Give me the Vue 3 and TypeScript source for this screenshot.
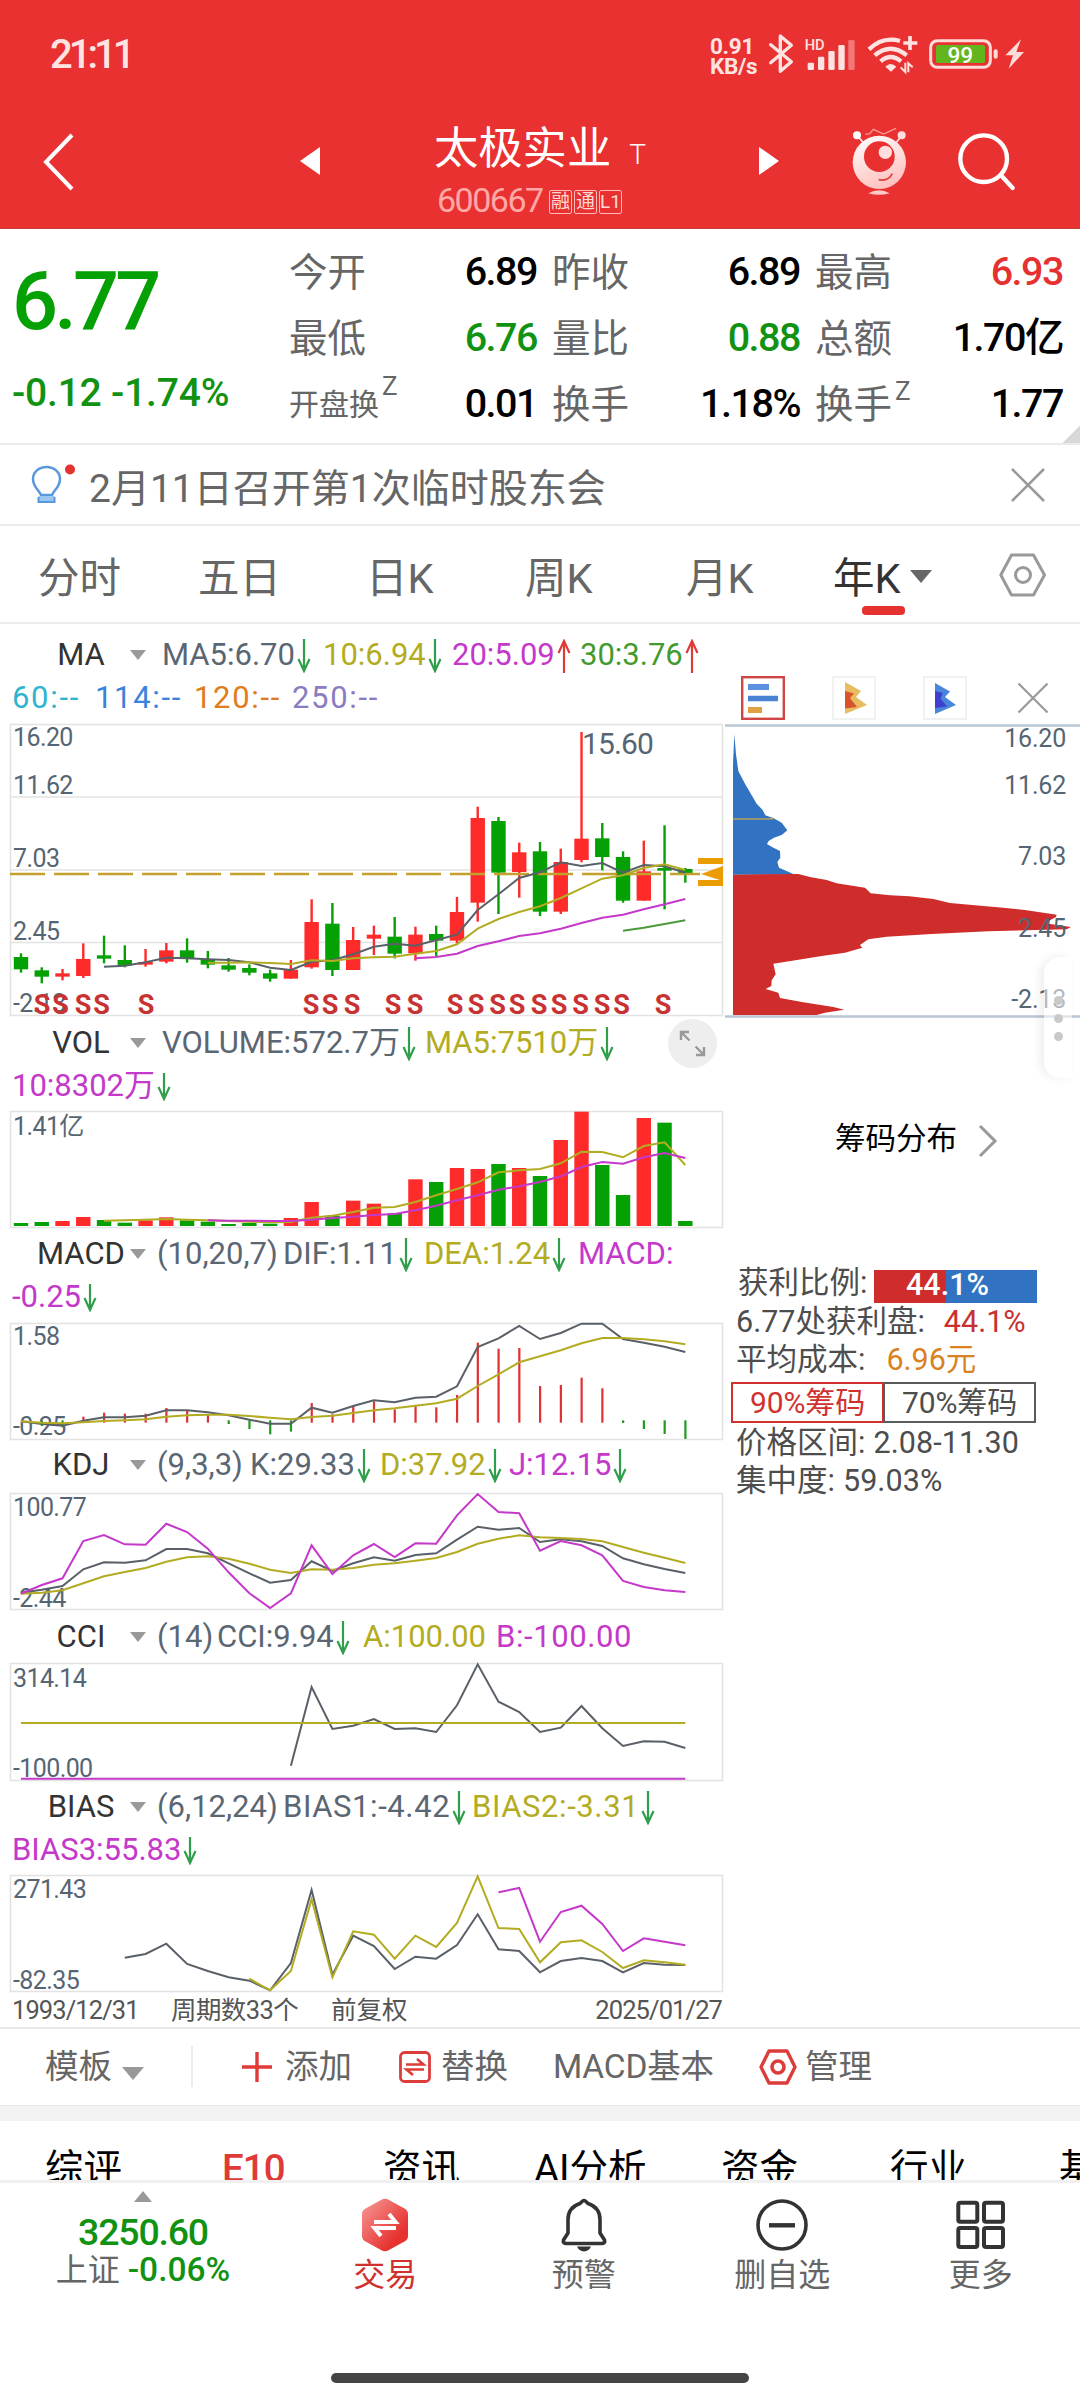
<script setup lang="ts">
type Arrow = 'up' | 'down' | ''
interface Reading { text: string; width: number; color: string; arrow?: Arrow }
interface Line { color: string; start: number; ys: number[] }
interface Label { text: string; y: number }
interface Bar { x: number; y: number; w: number; h: number; color: string }
interface Pane {
  name: string
  first: Reading[]
  second?: Reading[]
  top: number
  height: number
  frame: [number, number]
  labels: Label[]
  lines: Line[]
  bars: Bar[]
}

const GRAY = '#5b6673'
const OLIVE = '#b3ac22'
const MAGENTA = '#c438ca'
const RED = '#ff2a2a'
const GREEN = '#04a004'

const cx = (i: number): number => 21 + 20.76 * i
const points = (l: Line, base: number): string =>
  l.ys.map((v, k) => `${cx(l.start + k).toFixed(1)},${(base + v / 3).toFixed(1)}`).join(' ')

const line = (color: string, start: number, ys: number[]): Line => ({ color, start, ys })

const candles: [number, number, number, number, 0 | 1][] = [
  [970, 981, 1018, 1028, 0], [1012, 1021, 1040, 1060, 0], [1017, 1030, 1040, 1051, 1],
  [940, 987, 1038, 1044, 1], [917, 976, 986, 1000, 0], [946, 990, 1006, 1012, 0],
  [957, 996, 1004, 1010, 1], [939, 961, 995, 1000, 1], [925, 961, 986, 998, 0],
  [963, 988, 1004, 1015, 0], [984, 1006, 1019, 1025, 0], [1003, 1014, 1028, 1036, 0],
  [1019, 1030, 1046, 1055, 0], [990, 1019, 1046, 1046, 1], [808, 876, 1012, 1016, 1],
  [819, 881, 1020, 1038, 0], [891, 930, 1020, 1020, 1], [887, 914, 926, 975, 1],
  [861, 920, 971, 985, 0], [890, 914, 970, 992, 1], [887, 912, 932, 978, 0],
  [801, 846, 932, 940, 1], [530, 564, 818, 875, 1], [561, 573, 728, 852, 0],
  [638, 667, 726, 803, 1], [636, 664, 845, 858, 0], [656, 696, 845, 852, 1],
  [306, 626, 690, 697, 1], [579, 625, 681, 721, 0], [664, 681, 812, 818, 0],
  [632, 724, 812, 812, 1], [586, 714, 722, 838, 0], [714, 717, 729, 758, 0],
]

const signals = [42, 60.5, 83, 101.5, 146, 311, 330, 352, 393, 415, 455, 476, 497.5, 517, 539, 559, 580.5, 602, 621.5, 663]

const vol: [number, 0 | 1][] = [
  [609, 0], [606, 0], [603, 1], [591, 1], [600, 0], [608, 0], [601, 1], [592, 1], [601, 0], [605, 0], [612, 0],
  [609, 0], [611, 0], [594, 1], [546, 1], [587, 0], [542, 1], [551, 1], [580, 0], [478, 1], [486, 0], [444, 1],
  [447, 1], [432, 0], [444, 1], [468, 0], [360, 1], [275, 1], [435, 0], [525, 0], [294, 1], [308, 0], [603, 0],
]
const volBars: Bar[] = vol.map(([t, up], i) => ({
  x: cx(i) - 7.2, y: 1020 + t / 3, w: 14.4, h: (618 - t) / 3, color: up ? RED : GREEN,
}))

const hist = [0, 588, 592, 560, 548, 551, 551, 534, 543, 555, 582, 597, 613, 605, 519, 553, 528, 514, 538, 525, 532,
  495, 338, 356, 354, 468, 465, 443, 475, 579, 597, 612, 627]
const histBars: Bar[] = hist.map((v, i) => {
  const down = v > 577 || i === 1 || i === 2
  const a = down ? 571 : v
  const b = down ? v : 578
  return { x: cx(i) - 1, y: 1230 + a / 3, w: 2.2, h: v ? (b - a) / 3 : 0, color: down ? '#1f9a1f' : '#e03030' }
})

const base: Record<string, number> = { VOL: 1020, MACD: 1230, KDJ: 1440, CCI: 1610, BIAS: 1780 }

const maRows: Reading[][] = [
  [
    { text: 'MA5:6.70', width: 161, color: GRAY, arrow: 'down' },
    { text: '10:6.94', width: 129, color: OLIVE, arrow: 'down' },
    { text: '20:5.09', width: 128, color: MAGENTA, arrow: 'up' },
    { text: '30:3.76', width: 120, color: '#439a2c', arrow: 'up' },
  ],
  [
    { text: '60:--', width: 83, color: '#2fb4cf' },
    { text: '114:--', width: 99, color: '#3a83dd' },
    { text: '120:--', width: 98, color: '#e07c1e' },
    { text: '250:--', width: 100, color: '#8a7cc0' },
  ],
]

const maLines: Line[] = [
  line('#5a6068', 4, [1010, 1007, 997, 983, 985, 988, 990, 997, 1013, 1020, 995, 991, 973, 950, 941, 947, 930, 914, 840, 793, 744, 727, 697, 708, 699, 728, 705, 709, 728]),
  line(OLIVE, 9, [998, 998, 997, 999, 1002, 991, 993, 985, 982, 980, 971, 963, 943, 896, 867, 846, 829, 804, 775, 746, 736, 714, 703, 720]),
  line(MAGENTA, 19, [985, 981, 971, 948, 934, 918, 910, 896, 879, 863, 854, 838, 823, 807]),
  line('#4a9a3a', 29, [902, 893, 882, 871]),
]

const panes: Pane[] = [
  {
    name: 'VOL',
    first: [
      { text: 'VOLUME:572.7万', width: 263, color: GRAY, arrow: 'down' },
      { text: 'MA5:7510万', width: 200, color: OLIVE, arrow: 'down' },
    ],
    second: [{ text: '10:8302万', width: 180, color: MAGENTA, arrow: 'down' }],
    top: 1107, height: 125, frame: [1112, 1227],
    labels: [{ text: '1.41亿', y: 1134.5 }],
    bars: volBars,
    lines: [
      line(OLIVE, 4, [602, 601, 599, 597, 599, 601, 603, 605, 607, 606, 593, 587, 576, 563, 561, 546, 526, 507, 487, 457, 451, 447, 430, 395, 396, 412, 378, 367, 435]),
      line(MAGENTA, 9, [601, 602, 602, 603, 603, 599, 594, 590, 585, 582, 571, 557, 541, 526, 509, 499, 486, 469, 441, 426, 431, 412, 399, 414]),
    ],
  },
  {
    name: 'MACD',
    first: [
      { text: '(10,20,7)', width: 126, color: GRAY },
      { text: 'DIF:1.11', width: 141, color: GRAY, arrow: 'down' },
      { text: 'DEA:1.24', width: 154, color: OLIVE, arrow: 'down' },
      { text: 'MACD:', width: 100, color: MAGENTA },
    ],
    second: [{ text: '-0.25', width: 100, color: MAGENTA, arrow: 'down' }],
    top: 1318, height: 125, frame: [1324, 1439],
    labels: [{ text: '1.58', y: 1345 }, { text: '-0.25', y: 1434.5 }],
    bars: histBars,
    lines: [
      line('#5a6068', 0, [574, 582, 587, 572, 562, 562, 557, 541, 541, 547, 556, 569, 581, 581, 533, 548, 528, 511, 517, 503, 500, 469, 351, 325, 288, 327, 309, 281, 281, 327, 338, 350, 366]),
      line(OLIVE, 0, [574, 578, 580, 577, 573, 571, 568, 560, 556, 554, 554, 558, 563, 568, 561, 557, 549, 541, 535, 527, 520, 506, 468, 433, 397, 379, 361, 340, 324, 324, 328, 334, 343]),
    ],
  },
  {
    name: 'KDJ',
    first: [
      { text: '(9,3,3)', width: 93, color: GRAY },
      { text: 'K:29.33', width: 130, color: GRAY, arrow: 'down' },
      { text: 'D:37.92', width: 129, color: OLIVE, arrow: 'down' },
      { text: 'J:12.15', width: 130, color: MAGENTA, arrow: 'down' },
    ],
    top: 1486, height: 129, frame: [1494, 1609],
    labels: [{ text: '100.77', y: 1516 }, { text: '-2.44', y: 1606.5 }],
    bars: [],
    lines: [
      line('#5a6068', 0, [458, 449, 438, 388, 367, 368, 361, 327, 327, 340, 370, 400, 428, 420, 364, 393, 370, 352, 362, 345, 340, 299, 260, 269, 264, 306, 298, 304, 318, 355, 373, 387, 399]),
      line(OLIVE, 0, [461, 458, 451, 430, 409, 396, 384, 365, 352, 349, 356, 371, 389, 399, 388, 389, 384, 374, 370, 362, 354, 336, 311, 296, 286, 292, 294, 297, 304, 321, 338, 353, 369]),
      line(MAGENTA, 0, [461, 435, 415, 303, 285, 313, 314, 251, 276, 326, 397, 460, 504, 460, 316, 402, 346, 312, 351, 310, 311, 226, 162, 216, 220, 332, 303, 316, 346, 423, 441, 451, 456]),
    ],
  },
  {
    name: 'CCI',
    first: [
      { text: '(14)', width: 60, color: GRAY },
      { text: 'CCI:9.94', width: 146, color: GRAY, arrow: 'down' },
      { text: 'A:100.00', width: 133, color: OLIVE },
      { text: 'B:-100.00', width: 140, color: MAGENTA },
    ],
    top: 1658, height: 127, frame: [1664, 1780],
    labels: [{ text: '314.14', y: 1687 }, { text: '-100.00', y: 1777 }],
    bars: [],
    lines: [
      line('#5a6068', 13, [467, 231, 357, 347, 327, 357, 355, 366, 286, 163, 275, 306, 366, 353, 288, 355, 408, 394, 395, 414]),
      line(OLIVE, 0, new Array(33).fill(339)),
      line(MAGENTA, 0, new Array(33).fill(506)),
    ],
  },
  {
    name: 'BIAS',
    first: [
      { text: '(6,12,24)', width: 126, color: GRAY },
      { text: 'BIAS1:-4.42', width: 189, color: GRAY, arrow: 'down' },
      { text: 'BIAS2:-3.31', width: 189, color: OLIVE, arrow: 'down' },
    ],
    second: [{ text: 'BIAS3:55.83', width: 200, color: MAGENTA, arrow: 'down' }],
    top: 1871, height: 125, frame: [1876, 1991],
    labels: [{ text: '271.43', y: 1898 }, { text: '-82.35', y: 1988.5 }],
    bars: [],
    lines: [
      line('#5a6068', 5, [533, 522, 491, 552, 573, 592, 602, 631, 549, 330, 584, 467, 498, 567, 530, 536, 495, 403, 508, 513, 577, 543, 534, 543, 577, 549, 554, 555]),
      line(OLIVE, 11, [596, 631, 573, 358, 592, 454, 464, 536, 467, 501, 429, 289, 444, 447, 547, 487, 481, 516, 564, 541, 547, 554]),
      line(MAGENTA, 23, [337, 324, 485, 396, 377, 432, 513, 475, 485, 496]),
    ],
  },
]

const quotes = [
  { label: '今开', value: '6.89', tone: '' }, { label: '昨收', value: '6.89', tone: '' }, { label: '最高', value: '6.93', tone: 'up' },
  { label: '最低', value: '6.76', tone: 'down' }, { label: '量比', value: '0.88', tone: 'down' }, { label: '总额', value: '1.70亿', tone: '' },
  { label: '开盘换', value: '0.01', tone: '', z: true, small: true }, { label: '换手', value: '1.18%', tone: '' }, { label: '换手', value: '1.77', tone: '', z: true },
]

const tabs = [
  { text: '分时', width: 160 }, { text: '五日', width: 168 }, { text: '日K', width: 159 },
  { text: '周K', width: 161 }, { text: '月K', width: 147 }, { text: '年K', width: 165 },
]

const sections = [
  { text: '综评', width: 177 }, { text: 'E10', width: 161 }, { text: '资讯', width: 151 }, { text: 'AI分析', width: 187 },
  { text: '资金', width: 169 }, { text: '行业', width: 169 }, { text: '基', width: 60 },
]

const chipLabels: Label[] = [
  { text: '16.20', y: 745.7 }, { text: '11.62', y: 793 }, { text: '7.03', y: 863.7 }, { text: '2.45', y: 935.7 }, { text: '-2.13', y: 1006.7 },
]
</script>

<template>
  <div class="screen">
    <header class="head">
      <div class="status">
        <span class="clock">21:11</span>
        <span class="speed"><b>0.91</b><b>KB/s</b></span>
        <svg class="sysicons" width="265" height="50" viewBox="195 30 795 150">
          <g fill="none" stroke="#ffe3e2" stroke-width="10" stroke-linejoin="round" stroke-linecap="round">
            <path d="M212 74 L274 125 L241 154 V48 L274 76 L212 128" />
          </g>
          <text x="314" y="89" class="hd">HD</text>
          <g fill="#ffe3e2">
            <rect x="323" y="128" width="19" height="22" rx="4" />
            <rect x="354" y="110" width="19" height="40" rx="4" />
            <rect x="385" y="93" width="19" height="57" rx="4" />
            <rect x="415" y="75" width="19" height="75" rx="4" />
            <rect x="445" y="60" width="19" height="90" rx="4" opacity=".4" />
          </g>
          <g fill="none" stroke="#ffe3e2" stroke-width="13">
            <path d="M507 88 Q548 48 600 63" />
            <path d="M524 106 Q572 66 620 106" />
            <path d="M542 124 Q572 98 603 124" />
            <path d="M630 48 V90 M610 69 H652" stroke-width="11" />
            <path d="M616 128 V156 L602 142 M625 157 V130 L638 142" stroke-width="6" />
          </g>
          <path d="M556 140 Q572 124 589 140 L573 155 Z" fill="#ffe3e2" />
          <rect x="692" y="62" width="179" height="80" rx="20" fill="none" stroke="#ffdcda" stroke-width="9" />
          <rect x="708" y="75" width="147" height="54" rx="5" fill="#62b51c" />
          <text x="781" y="128" text-anchor="middle" class="batt">99</text>
          <rect x="881" y="88" width="12" height="28" rx="6" fill="#ffdcda" />
          <path d="M963 58 L916 106 H939 L926 146 L972 96 H949 Z" fill="#ffdcda" />
        </svg>
      </div>
      <div class="nav">
        <svg class="back" width="34" height="60" viewBox="0 0 34 60"><path d="M30 3 L4 30 L30 57" fill="none" stroke="#fff" stroke-width="4" /></svg>
        <svg class="prev" width="20" height="28" viewBox="0 0 20 28"><path d="M20 0 V28 L0 14Z" fill="#fff" /></svg>
        <div class="title">
          <div class="name">太极实业<span class="t">T</span></div>
          <div class="code"><span class="num">600667</span><i>融</i><i>通</i><i>L1</i></div>
        </div>
        <svg class="next" width="20" height="28" viewBox="0 0 20 28"><path d="M0 0 V28 L20 14Z" fill="#fff" /></svg>
        <svg class="bot" width="70" height="80" viewBox="435 300 210 240">
          <defs><linearGradient id="ball" x1="0" y1="0" x2=".4" y2="1"><stop offset="0" stop-color="#fff" /><stop offset="1" stop-color="#ffc4c2" /></linearGradient></defs>
          <path d="M472 347 L490 368 M605 347 L588 368" stroke="#ffe4e3" stroke-width="5" />
          <circle cx="471" cy="346" r="12" fill="#fff" /><circle cx="605" cy="346" r="12" fill="#ffdedd" />
          <path d="M496 343 L509 341 L520 328 L551 342 L588 325" fill="none" stroke="#ff9c98" stroke-width="4" />
          <circle cx="538" cy="427" r="80" fill="url(#ball)" />
          <circle cx="538" cy="410" r="46" fill="#e83030" />
          <circle cx="556" cy="397" r="20" fill="#ffdedd" />
          <path d="M536 479 Q565 485 577 461" fill="none" stroke="#e03c3c" stroke-width="5" />
          <path d="M505 520 Q538 502 569 520 Q538 529 505 520Z" fill="#ffc9c7" />
        </svg>
        <svg class="find" width="65" height="65" viewBox="765 330 195 195">
          <circle cx="851" cy="416" r="70" fill="none" stroke="#fff" stroke-width="13" />
          <path d="M903 466 L938 504" stroke="#fff" stroke-width="13" stroke-linecap="round" />
        </svg>
      </div>
    </header>

    <section class="quote">
      <div class="price"><div class="last">6.77</div><div class="chg">-0.12 -1.74%</div></div>
      <div class="grid">
        <div v-for="(q, i) in quotes" :key="i" class="cell">
          <span class="lab" :class="{ small: q.small }">{{ q.label }}<span v-if="q.z" class="z">Z</span></span>
          <span class="val" :class="q.tone">{{ q.value }}</span>
        </div>
      </div>
      <span class="corner"></span>
    </section>

    <section class="notice">
      <svg class="bulb" width="48" height="48" viewBox="0 0 48 48">
        <path d="M12 32 C10 27 4 24 4 16 C4 9 10 4 17.500 4 C25 4 31 9 31 16 C31 24 25 27 23 32 Z" fill="none" stroke="#5a98dc" stroke-width="2.500" />
        <path d="M9.500 33 H25.500 V40 H9.500Z" fill="#9cc6f2" /><path d="M9.500 34 V39 H25.500 V34" fill="none" stroke="#5a98dc" stroke-width="2" />
        <circle cx="41" cy="6.500" r="5" fill="#e5312f" />
      </svg>
      <span class="msg">2月11日召开第1次临时股东会</span>
      <svg class="close" width="36" height="36" viewBox="0 0 36 36"><path d="M2 2 L34 34 M34 2 L2 34" stroke="#999" stroke-width="2.600" /></svg>
    </section>

    <nav class="tabs">
      <span v-for="(t, i) in tabs" :key="t.text" class="tab" :class="{ on: i === 5 }" :style="{ width: t.width + 'px' }">{{ t.text }}<i v-if="i === 5" class="caret"></i></span>
      <svg width="48" height="46" viewBox="0 0 48 46">
        <path d="M12.500 3 H34.500 L45.500 23 L34.500 43 H12.500 L1.800 23 Z" fill="none" stroke="#999" stroke-width="3" stroke-linejoin="round" />
        <circle cx="24" cy="23" r="7.500" fill="none" stroke="#999" stroke-width="3" />
      </svg>
    </nav>

    <main class="board">
      <div class="left">
        <div class="pane">
          <div class="row lead">
            <span class="iname">MA</span><i class="tri"></i>
            <span v-for="r in maRows[0]" :key="r.text" class="rd" :style="{ width: r.width + 'px', color: r.color }">{{ r.text }}<svg v-if="r.arrow" class="arr" :class="r.arrow" width="14" height="34" viewBox="0 0 14 34"><path d="M7 0 V31 M1.500 20 L7 32 L12.500 20" /></svg></span>
          </div>
          <div class="row empty">
            <span v-for="r in maRows[1]" :key="r.text" class="rd" :style="{ width: r.width + 'px', color: r.color }">{{ r.text }}</span>
          </div>
          <svg class="plot" width="725" height="302" viewBox="0 719 725 302">
            <rect x="10.500" y="724.500" width="712" height="291" class="frame" />
            <path d="M10 797 H723 M10 870 H723 M10 942.500 H723" class="frame" />
            <g class="axis">
              <text x="13" y="746">16.20</text><text x="13" y="793.500">11.62</text><text x="13" y="867">7.03</text>
              <text x="13" y="939.500">2.45</text><text x="13" y="1012">-2.13</text>
            </g>
            <g v-for="(c, i) in candles" :key="i" :fill="c[4] ? RED : GREEN">
              <rect :x="cx(i) - 1.2" :y="630 + c[0] / 3" width="2.4" :height="(c[3] - c[0]) / 3" />
              <rect :x="cx(i) - 7.2" :y="630 + c[1] / 3" width="14.4" :height="(c[2] - c[1]) / 3" />
            </g>
            <path d="M10 874 H700" stroke="#c5a02f" stroke-width="2.400" stroke-dasharray="35 9" />
            <polyline v-for="l in maLines" :key="l.color" :points="points(l, 630)" fill="none" :stroke="l.color" stroke-width="2" />
            <g fill="#eb9c05"><rect x="698" y="858" width="25" height="6" /><rect x="698" y="880" width="25" height="6" /><path d="M701 874 L723 866 V881Z" /></g>
            <text x="582" y="754" class="peak">15.60</text>
            <text v-for="s in signals" :key="s" :x="s" y="1014" text-anchor="middle" class="sig">S</text>
          </svg>
        </div>

        <div v-for="p in panes" :key="p.name" class="pane">
          <div class="row lead">
            <span class="iname">{{ p.name }}</span><i class="tri"></i>
            <span v-for="(r, k) in p.first" :key="r.text" class="rd" :class="{ par: k === 0 && r.text[0] === '(', neg: r.text.includes(':-') }" :style="{ width: r.width + 'px', color: r.color }">{{ r.text }}<svg v-if="r.arrow" class="arr" :class="r.arrow" width="14" height="34" viewBox="0 0 14 34"><path d="M7 0 V31 M1.500 20 L7 32 L12.500 20" /></svg></span>
            <span v-if="p.name === 'VOL'" class="expand">
              <svg width="49" height="49" viewBox="0 0 49 49"><path d="M13 21 V13 H21 M13 13 L21.500 21.500 M36 28 V36 H28 M36 36 L27.500 27.500" fill="none" stroke="#999" stroke-width="2.400" /></svg>
            </span>
          </div>
          <div v-if="p.second" class="row">
            <span v-for="r in p.second" :key="r.text" class="rd" :style="{ width: r.width + 'px', color: r.color }">{{ r.text }}<svg v-if="r.arrow" class="arr short" :class="r.arrow" width="14" height="28" viewBox="0 6 14 28"><path d="M7 6 V31 M1.500 20 L7 32 L12.500 20" /></svg></span>
          </div>
          <svg class="plot" width="725" :height="p.height" :viewBox="`0 ${p.top} 725 ${p.height}`">
            <rect x="10.500" :y="p.frame[0] - 0.5" width="712" :height="p.frame[1] - p.frame[0] + 1" class="frame" />
            <g class="axis"><text v-for="a in p.labels" :key="a.text" x="13" :y="a.y">{{ a.text }}</text></g>
            <rect v-for="(b, i) in p.bars" :key="i" :x="b.x" :y="b.y" :width="b.w" :height="b.h" :fill="b.color" />
            <polyline v-for="l in p.lines" :key="l.color" :points="points(l, base[p.name])" fill="none" :stroke="l.color" stroke-width="2" />
          </svg>
        </div>
        <div class="dates"><span class="d1">1993/12/31</span><span class="d2">周期数33个</span><span>前复权</span><span class="d3">2025/01/27</span></div>
      </div>

      <aside class="right">
        <div class="modes">
          <svg width="44" height="44" viewBox="0 0 44 44"><rect x="1.200" y="1.200" width="41.600" height="41.600" fill="#fff" stroke="#cf4644" stroke-width="2.400" /><path d="M7 11 H28" stroke="#5c90e0" stroke-width="6" /><path d="M7 22.500 H37" stroke="#4a82d4" stroke-width="5.500" /><path d="M7 34 H21" stroke="#e0a044" stroke-width="6" /></svg>
          <svg width="44" height="44" viewBox="0 0 44 44"><rect x="1" y="1" width="42" height="42" fill="#fff" stroke="#f1f1f1" stroke-width="2" /><path d="M13 6 L29 15 L24 21 L35 29 L13 38Z" fill="#e8bd62" /><path d="M13 15 L22 17.500 L18 22 L25 31 L13 32.500Z" fill="#d9522e" /></svg>
          <svg width="44" height="44" viewBox="0 0 44 44"><rect x="1" y="1" width="42" height="42" fill="#fff" stroke="#f1f1f1" stroke-width="2" /><path d="M12 7 L27 15.500 L22 21 L33 29 L12 38Z" fill="#4a86dc" /><path d="M12 15 L20 17 L17.500 22.500 L24 30.500 L12 32Z" fill="#3f3fd0" /></svg>
          <svg class="x" width="32" height="32" viewBox="0 0 32 32"><path d="M1.500 1.500 L30.500 30.500 M30.500 1.500 L1.500 30.500" stroke="#999" stroke-width="2.200" /></svg>
        </div>
        <svg class="plot" width="355" height="302" viewBox="725 719 355 302">
          <g transform="translate(700 630) scale(.33333)">
            <path fill="#3173c2" d="M99 731V400L103 310L108 370L115 420L135 458L170 518L188 537L196 553L221 562L245 575L262 598L245 612L222 620L206 630L201 639L216 648L240 660L241 680L232 693L237 710L275 727L285 731Z" />
            <path fill="#cf2d2c" d="M99 731L295 729L330 738L380 747L410 757L495 770L512 787L570 793L628 796L700 804L750 816L850 825L910 830L980 838L1070 851L1068 858L1050 868L1045 878L1113 888L1100 895L865 901L695 909L560 917L505 925L480 942L487 950L435 965L365 975L305 985L220 998L227 1030L215 1048L214 1065L197 1074L235 1085L240 1101L310 1114L400 1128L433 1136L375 1145L350 1152H99Z" />
            <path d="M99 564H208L221 562" stroke="#b3a35c" stroke-width="5" fill="none" />
          </g>
          <path d="M725 724.500 H1080 M725 1015.500 H1080" stroke="#bac6d4" stroke-width="2.400" />
          <g class="axis wide"><text v-for="a in chipLabels" :key="a.text" x="1066" :y="a.y" text-anchor="end">{{ a.text }}</text></g>
        </svg>
        <div class="link">筹码分布<svg width="20" height="34" viewBox="0 0 20 34"><path d="M2 2 L17 17 L2 32" fill="none" stroke="#999" stroke-width="3" /></svg></div>
        <div class="stats">
          <div class="st first">获利比例:<span class="ratio">44.1%</span></div>
          <div class="st">6.77处获利盘:<em class="r">44.1%</em></div>
          <div class="st">平均成本:<em class="o">6.96元</em></div>
          <div class="btns"><span class="b90">90%筹码</span><span class="b70">70%筹码</span></div>
          <div class="st">价格区间:<em class="n">2.08-11.30</em></div>
          <div class="st">集中度:<em class="n">59.03%</em></div>
        </div>
        <div class="handle"><i></i><i></i><i></i></div>
      </aside>
    </main>

    <section class="tools">
      <span class="tpl">模板<i class="caret"></i></span>
      <i class="div"></i>
      <svg class="plus" width="30" height="30" viewBox="0 0 30 30"><path d="M15 0 V30 M0 15 H30" stroke="#e03a38" stroke-width="3.400" /></svg>
      <span class="add">添加</span>
      <svg class="swap" width="32" height="32" viewBox="0 0 32 32"><rect x="1.500" y="1.500" width="29" height="29" rx="4" fill="none" stroke="#dc3c3a" stroke-width="2.800" /><path d="M7 13.500 H24.500 L18 8 M25 18.500 H7.500 L14 24" fill="none" stroke="#dc3c3a" stroke-width="2.600" /></svg>
      <span class="rep">替换</span>
      <span class="basic">MACD基本</span>
      <svg class="gear" width="38" height="36" viewBox="0 0 38 36"><path d="M10 2 H28 L36 18 L28 34 H10 L2 18Z" fill="none" stroke="#dc3c3a" stroke-width="3.400" stroke-linejoin="round" /><circle cx="19" cy="18" r="6" fill="none" stroke="#dc3c3a" stroke-width="3.600" /></svg>
      <span>管理</span>
    </section>
    <div class="band"></div>
    <section class="sections">
      <span v-for="s in sections" :key="s.text" :class="{ hot: s.text === 'E10' }" :style="{ width: s.width + 'px' }">{{ s.text }}</span>
    </section>

    <footer class="foot">
      <div class="index">
        <i class="upcaret"></i>
        <div class="pt">3250.60</div>
        <div class="ix">上证 <span>-0.06%</span></div>
      </div>
      <div class="act trade">
        <svg width="56" height="56" viewBox="0 0 56 56">
          <defs><linearGradient id="hex" x1="0" y1="0" x2="1" y2="1"><stop offset=".1" stop-color="#f58d8a" /><stop offset=".75" stop-color="#e63330" /></linearGradient></defs>
          <path d="M24 3 Q28 .5 32 3 L47.500 11.500 Q51 13.500 51 17 V39 Q51 42.500 47.500 44.500 L32 53 Q28 55.500 24 53 L8.500 44.500 Q5 42.500 5 39 V17 Q5 13.500 8.500 11.500Z" fill="url(#hex)" />
          <path d="M17 25 H38.500 L32 17 M39 31 H17.500 L24 39" fill="none" stroke="#fff" stroke-width="4" />
        </svg><span>交易</span>
      </div>
      <div class="act">
        <svg width="56" height="56" viewBox="0 0 56 56"><path d="M28 3.500 C29.500 3.500 30.500 5.500 32 6.500 C40 9 44 15 44 23 V36 L48.500 43 Q49.500 46 46 46.500 H10 Q6.500 46 7.500 43 L12 36 V23 C12 15 16 9 24 6.500 C25.500 5.500 26.500 3.500 28 3.500Z" fill="none" stroke="#333" stroke-width="3.600" stroke-linejoin="round" /><path d="M21 49.500 H35 Q33 54 28 54.500 Q23 54 21 49.500Z" fill="#333" /></svg>
        <span>预警</span>
      </div>
      <div class="act">
        <svg width="56" height="56" viewBox="0 0 56 56"><circle cx="28" cy="28" r="24" fill="none" stroke="#333" stroke-width="3.600" /><path d="M15 28.300 H41" stroke="#333" stroke-width="4.400" /></svg>
        <span>删自选</span>
      </div>
      <div class="act">
        <svg width="56" height="56" viewBox="0 0 56 56"><g fill="none" stroke="#333" stroke-width="4"><rect x="5.300" y="5.800" width="19" height="19" rx="2" /><rect x="31" y="5.800" width="19" height="19" rx="2" /><rect x="5.300" y="31" width="19" height="19" rx="2" /><rect x="31" y="31" width="19" height="19" rx="2" /></g></svg>
        <span>更多</span>
      </div>
    </footer>
    <div class="home"></div>
  </div>
</template>

<style>
body { background: #fff; }
</style>
<style scoped>
* { box-sizing: border-box; }
.screen { width: 1080px; height: 2400px; background: #fff; font-family: Roboto, "Noto Sans CJK SC", sans-serif; overflow: hidden; display: flex; flex-direction: column; color: #666; }
.screen > * { flex: none; }
svg { display: block; flex: none; }
i, em { font-style: normal; }
.head { height: 229px; background: #e83130; border-bottom: 1px solid #c8403c; color: #fff; }
.status { height: 93px; display: flex; align-items: flex-start; }
.clock { margin: 34px 0 0 50px; width: 660px; font-size: 40px; line-height: 41px; font-weight: 500; letter-spacing: -4px; color: #ffe3e2; }
.speed { width: 55px; margin-top: 37px; display: flex; flex-direction: column; font-size: 22.500px; line-height: 19.500px; color: #ffe3e2; }
.speed b { letter-spacing: -.3px; }
.sysicons { margin-top: 30px; }
.hd { font: 500 44px Roboto, sans-serif; fill: #ffe3e2; }
.batt { font: 500 68px Roboto, sans-serif; fill: #fff; }
.nav { height: 135px; display: flex; align-items: center; }
.back { margin-left: 42px; margin-top: 2px; }
.prev { margin-left: 224px; }
.title { align-self: flex-start; margin: 29px 0 0 114px; width: 215px; }
.name { font-size: 44.300px; line-height: 54px; white-space: nowrap; }
.name .t { font-size: 28px; margin-left: 18px; font-weight: 300; }
.code { display: flex; align-items: center; height: 28px; margin-top: 4px; padding-left: 3px; }
.code .num { font-size: 34px; line-height: 28px; letter-spacing: -1.500px; color: #ffa8a5; width: 112px; }
.code i { width: 23px; height: 24px; border: 1.500px solid #ffb9b7; border-radius: 2px; margin: 4px 2px 0 0; font-size: 19px; line-height: 22px; text-align: center; color: #ffdad9; display: flex; justify-content: center; }
.next { margin-left: 110px; }
.bot { margin-left: 66px; margin-top: -2px; }
.find { margin-left: 40px; margin-top: 4px; }
.quote { position: relative; height: 216px; border-bottom: 2px solid #ebebeb; display: flex; }
.price { width: 289px; padding-left: 12px; color: #04a004; font-weight: 500; }
.last { font-size: 81px; line-height: 90px; margin-top: 28px; letter-spacing: -3.800px; }
.chg { font-size: 39px; line-height: 46px; margin-top: 23px; color: #129212; white-space: nowrap; letter-spacing: -.2px; }
.grid { display: grid; grid-template-columns: repeat(3, 248px); column-gap: 15px; grid-auto-rows: 66px; padding-top: 9px; }
.cell { display: flex; justify-content: space-between; font-size: 39.500px; line-height: 66px; white-space: nowrap; }
.lab { font-size: 38.500px; color: #666; padding-top: 2px; }
.lab.small { font-size: 30px; }
.z { display: inline-block; font-size: 26px; line-height: 30px; transform: translateY(-18px); margin-left: 3px; }
.lab.small .z { transform: translateY(-20px); }
.val { color: #000; font-weight: 500; letter-spacing: -1.500px; padding-top: 1px; }
.val.up { color: #e5312f; }
.val.down { color: #129212; }
.corner { position: absolute; right: 0; bottom: 0; width: 17px; height: 17px; background: linear-gradient(135deg, transparent 50%, #d8d8d8 50%); }
.notice { height: 81px; border-bottom: 2px solid #ececec; display: flex; align-items: center; padding-left: 29px; }
.bulb { margin-top: 4px; }
.msg { font-size: 39px; line-height: 60px; margin: 8px 0 0 12px; width: 921px; }
.tabs { height: 98px; border-bottom: 2px solid #ececec; display: flex; align-items: center; padding-left: 38px; }
.tab { font-size: 41.500px; line-height: 60px; position: relative; margin-top: 10px; white-space: nowrap; }
.tabs svg { margin-left: 1px; margin-top: 2px; }
.tab.on { color: #333; }
.tab.on::after { content: ""; position: absolute; left: 29px; top: 57px; width: 43px; height: 9px; border-radius: 4px; background: #e5312f; }
.caret { display: inline-block; border: 11.500px solid transparent; border-top: 12px solid #666; border-bottom: 0; margin-left: 8px; vertical-align: 8px; }
.tab .caret { border-top-width: 13px; margin-left: 9px; vertical-align: 10px; }
.board { display: flex; height: 1405px; border-bottom: 2px solid #eaeaea; }
.left { width: 725px; padding-top: 9px; }
.row { position: relative; display: flex; height: 43px; line-height: 43px; font-size: 31px; padding-left: 12px; white-space: nowrap; }
.row.lead { padding-left: 0; }
.row.empty { letter-spacing: 1.700px; }
.iname { width: 162px; text-align: center; color: #333; margin-right: -32px; flex: none; }
.tri { width: 0; height: 0; border: 8.500px solid transparent; border-top: 10.500px solid #999; border-bottom: 0; margin: 17px 16px 0 0; flex: none; }
.rd { flex: none; display: flex; align-items: center; }
.rd.par { margin-left: -5px; }
.rd.neg { letter-spacing: .6px; }
.arr { margin-left: 2px; margin-top: 2px; fill: none; stroke: #2f9f4c; stroke-width: 2.200px; }
.arr.up { transform: rotate(180deg); stroke: #e03a34; }
.expand { position: absolute; left: 668px; top: -2px; width: 49px; height: 49px; border-radius: 50%; background: #eee; }
.frame { fill: none; stroke: #e3e3e3; stroke-width: 1.600px; }
.axis text { font: 25px Roboto, "Noto Sans CJK SC", sans-serif; fill: #566573; letter-spacing: -.6px; }
.axis.wide text { letter-spacing: -.2px; }
.peak { font: 30px Roboto, sans-serif; fill: #566573; letter-spacing: -.9px; }
.sig { font: 700 27px Roboto, sans-serif; fill: #c93232; }
.dates { display: flex; height: 28px; line-height: 28px; font-size: 25.500px; color: #555; padding: 0 3px 0 12px; white-space: nowrap; }
.d1 { width: 159px; letter-spacing: -.9px; }
.d2 { width: 160px; letter-spacing: -.6px; }
.d3 { margin-left: auto; letter-spacing: -.9px; }
.right { position: relative; width: 355px; }
.modes { height: 96px; padding: 52px 0 0 16px; display: flex; gap: 47px; align-items: flex-start; }
.modes .x { margin: 6px 0 0 3px; }
.link { height: 40px; margin: 97px 0 0 110px; font-size: 30.500px; line-height: 40px; color: #000; display: flex; align-items: center; }
.link svg { margin-left: 21px; margin-top: 3px; }
.stats { margin-top: 103px; padding-left: 11px; font-size: 30.500px; color: #4d4d4d; }
.st { display: flex; height: 38px; line-height: 38px; white-space: nowrap; align-items: center; }
.st.first { padding-left: 2px; height: 41px; }
.ratio { margin: 8px 0 0 4px; width: 163px; height: 33px; line-height: 29px; text-align: center; padding-right: 16px; color: #fff; font-weight: 500; background: linear-gradient(90deg, #cf2d2c 44.100%, #3173c2 44.100%); position: absolute; left: 145px; }
.r { color: #c8312f; font-weight: 400; margin-left: 19px; }
.o { color: #d9821f; margin-left: 21px; }
.n { margin-left: 8px; letter-spacing: .1px; }
.btns { display: flex; height: 41px; margin: 3px 0 1px -5px; }
.btns span { width: 153px; height: 41px; line-height: 37px; text-align: center; border: 2px solid #5a5a5a; font-size: 30px; letter-spacing: -.1px; }
.btns .b90 { color: #d0312f; border-color: #d0312f; }
.btns .b70 { margin-left: -1px; }
.handle { position: absolute; left: 319px; top: 333px; width: 28px; height: 121px; border-radius: 16px 0 0 16px; background: rgba(255, 255, 255, .55); box-shadow: -4px 0 10px rgba(0, 0, 0, .07); display: flex; flex-direction: column; align-items: center; gap: 9px; padding-top: 39px; }
.handle i { width: 9px; height: 9px; border-radius: 50%; background: #c9c9c9; }
.tools { height: 76px; display: flex; align-items: center; padding-left: 45px; font-size: 33.500px; line-height: 50px; color: #666; padding-bottom: 1px; white-space: nowrap; }
.tpl { width: 146px; }
.tpl .caret { border-width: 13px 11px 0; border-top-color: #999; margin-left: 10px; vertical-align: -2px; }
.div { width: 2px; height: 41px; background: #ececec; }
.plus { margin-left: 49px; }
.add { margin-left: 13px; width: 114px; }
.swap { margin-left: 0; }
.rep { margin-left: 10px; width: 112px; }
.basic { width: 206px; letter-spacing: -.2px; }
.gear { margin-right: 8px; }
.band { height: 16px; background: #f3f3f3; border-top: 1px solid #e9e9e9; }
.sections { height: 62px; border-bottom: 3px solid #f0f0f0; overflow: hidden; display: flex; padding-left: 45px; font-size: 38.500px; line-height: 60px; padding-top: 18px; color: #000; white-space: nowrap; }
.sections span { flex: none; }
.sections .hot { color: #e03a38; font-weight: 500; letter-spacing: -1px; }
.foot { height: 180px; display: flex; }
.index { width: 286px; text-align: center; display: flex; flex-direction: column; align-items: center; }
.upcaret { border: 9.500px solid transparent; border-bottom: 11px solid #999; border-top: 0; margin-top: 8px; }
.pt { font-size: 37.500px; line-height: 42px; margin-top: 9px; color: #129212; font-weight: 500; letter-spacing: -1.200px; }
.ix { font-size: 32px; line-height: 38px; margin-top: -2px; white-space: nowrap; }
.ix span { color: #129212; font-weight: 500; font-size: 33.500px; }
.act { width: 198.500px; display: flex; flex-direction: column; align-items: center; padding-top: 15px; font-size: 32px; line-height: 40px; }
.act span { margin-top: 2px; }
.act.trade { color: #d0312d; }
.act svg { margin-top: -1px; }
.home { width: 418px; height: 10px; border-radius: 5px; background: #444; margin: 10px auto 0 331px; }
</style>
